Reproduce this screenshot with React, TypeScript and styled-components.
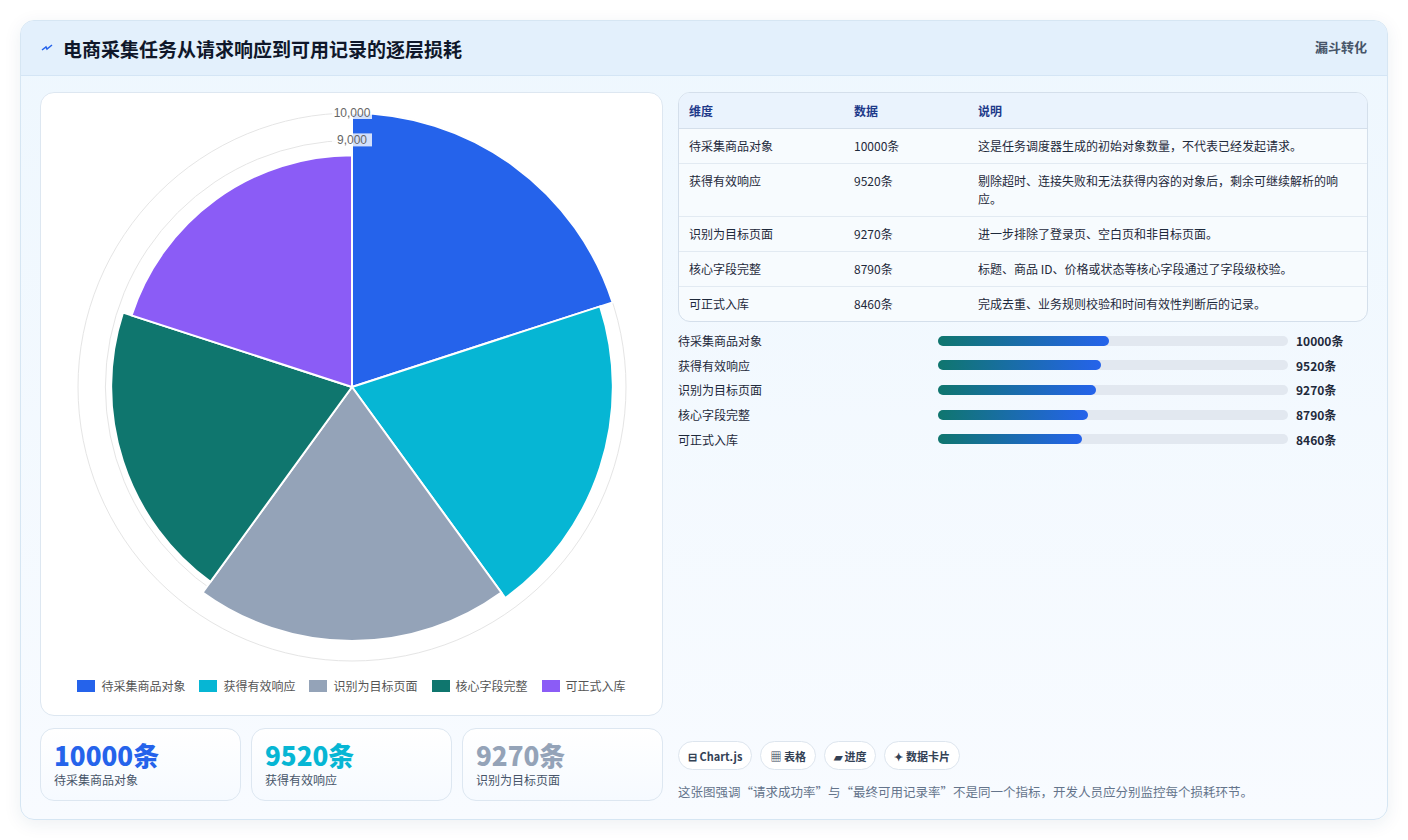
import React from 'react';
import styled, { createGlobalStyle } from 'styled-components';

const GlobalStyle = createGlobalStyle`
  html, body { margin: 0; padding: 0; background: #fff; }
  body { font-family: "Noto Sans CJK SC", "Noto Sans", sans-serif; color: #1e293b; }
  * { box-sizing: border-box; }
`;

const rows = [
  { name: '待采集商品对象', value: 10000, color: '#2563eb', note: '这是任务调度器生成的初始对象数量，不代表已经发起请求。' },
  { name: '获得有效响应', value: 9520, color: '#06b6d4', note: '剔除超时、连接失败和无法获得内容的对象后，剩余可继续解析的响应。' },
  { name: '识别为目标页面', value: 9270, color: '#94a3b8', note: '进一步排除了登录页、空白页和非目标页面。' },
  { name: '核心字段完整', value: 8790, color: '#0f766e', note: '标题、商品 ID、价格或状态等核心字段通过了字段级校验。' },
  { name: '可正式入库', value: 8460, color: '#8b5cf6', note: '完成去重、业务规则校验和时间有效性判断后的记录。' },
];

const Page = styled.div`
  padding: 20px;
`;

const Card = styled.div`
  width: 1368px;
  height: 800px;
  border: 1px solid #d6e6f3;
  border-radius: 14px;
  background: linear-gradient(180deg, #eef7fe 0%, #f8fbff 100%);
  box-shadow: 0 4px 18px rgba(30, 60, 100, 0.08);
  overflow: hidden;
  display: flex;
  flex-direction: column;
`;

const Header = styled.div`
  height: 56px;
  background: #e3f0fc;
  border-bottom: 1px solid #d4e5f5;
  display: flex;
  align-items: center;
  justify-content: space-between;
  padding: 0 20px;
`;

const Title = styled.h1`
  margin: 0;
  font-size: 19px;
  font-weight: 700;
  color: #0f172a;
  display: flex;
  align-items: center;
  gap: 10px;
`;

const Tag = styled.span`
  font-size: 13px;
  font-weight: 700;
  color: #475569;
  align-self: flex-start;
  margin-top: 16px;
`;

const Body = styled.div`
  flex: 1;
  display: grid;
  grid-template-columns: 623px 690px;
  gap: 15px;
  padding: 16px 19px 18px 19px;
`;

const LeftCol = styled.div`
  display: flex;
  flex-direction: column;
  gap: 12px;
`;

const ChartCard = styled.div`
  height: 624px;
  background: #fff;
  border: 1px solid #dde7f1;
  border-radius: 14px;
  display: flex;
  flex-direction: column;
  align-items: center;
`;

const Legend = styled.div`
  display: flex;
  gap: 14px;
  font-size: 12px;
  color: #555;
  margin-top: 6px;
`;

const LegendItem = styled.div`
  display: flex;
  align-items: center;
  gap: 6px;
`;

const Swatch = styled.span<{ $c: string }>`
  width: 18px;
  height: 12px;
  background: ${p => p.$c};
`;

const Stats = styled.div`
  display: grid;
  grid-template-columns: repeat(3, 1fr);
  gap: 10px;
`;

const Stat = styled.div`
  height: 73px;
  border: 1px solid #dde7f1;
  border-radius: 14px;
  background: linear-gradient(180deg, #fff, #f6faff);
  padding: 10px 13px;
`;

const StatValue = styled.div<{ $c: string }>`
  font-size: 26px;
  font-weight: 800;
  line-height: 32px;
  color: ${p => p.$c};
`;

const StatLabel = styled.div`
  font-size: 12px;
  color: #475569;
`;

const RightCol = styled.div`
  display: flex;
  flex-direction: column;
`;

const Table = styled.table`
  width: 100%;
  border-collapse: separate;
  border-spacing: 0;
  border: 1px solid #d4dfeb;
  border-radius: 12px;
  overflow: hidden;
  font-size: 12px;
  background: #f7fbfe;
`;

const Th = styled.th`
  text-align: left;
  font-weight: 700;
  color: #1e3a8a;
  background: #eaf3fd;
  padding: 9px 10px;
  height: 33px;
  border-bottom: 1px solid #d4dfeb;
`;

const Td = styled.td`
  padding: 8px 10px;
  color: #1e293b;
  vertical-align: top;
  line-height: 18px;
  border-bottom: 1px solid #e2eaf2;
  tr:last-child & { border-bottom: none; }
`;

const Bars = styled.div`
  display: flex;
  flex-direction: column;
  gap: 7px;
  margin-top: 10px;
`;

const BarRow = styled.div`
  display: grid;
  grid-template-columns: 260px 358px 72px;
  align-items: center;
  font-size: 12px;
  height: 17.6px;
`;

const Track = styled.div`
  height: 10px;
  border-radius: 5px;
  background: #e2e8f0;
  margin-right: 8px;
`;

const Fill = styled.div`
  height: 100%;
  border-radius: 5px;
  background: linear-gradient(90deg, #0f766e, #2563eb);
`;

const BarValue = styled.span`
  font-weight: 700;
  color: #1e293b;
`;

const Footer = styled.div`
  margin-top: auto;
  display: flex;
  flex-direction: column;
  gap: 12px;
`;

const Chips = styled.div`
  display: flex;
  gap: 8px;
`;

const Chip = styled.span`
  height: 29px;
  padding: 0 9px;
  border: 1px solid #dde5ee;
  border-radius: 15px;
  background: #fff;
  font-size: 11px;
  font-weight: 700;
  color: #334155;
  display: flex;
  align-items: center;
  gap: 4px;
`;

const Note = styled.p`
  margin: 0;
  font-size: 12.5px;
  color: #64748b;
`;

function PolarChart() {
  const cx = 311, cy = 294, R = 274;
  const rings = [1, 2, 3, 4, 5, 6, 7, 8, 9, 10];
  const arc = (r: number, a0: number, a1: number) => {
    const p = (a: number) => [cx + r * Math.sin(a), cy - r * Math.cos(a)];
    const [x0, y0] = p(a0);
    const [x1, y1] = p(a1);
    return `M${cx},${cy} L${x0},${y0} A${r},${r} 0 0 1 ${x1},${y1} Z`;
  };
  const step = (Math.PI * 2) / rows.length;
  return (
    <svg width="622" height="578" style={{ marginTop: 0 }}>
      {rings.map(k => (
        <circle key={k} cx={cx} cy={cy} r={(R * k) / 10} fill="none" stroke="#e5e5e5" strokeWidth="1" />
      ))}
      {rows.map((r, i) => (
        <path key={r.name} d={arc((R * r.value) / 10000, i * step, (i + 1) * step)} fill={r.color} stroke="#fff" strokeWidth="2" />
      ))}
      {[10, 9].map(k => (
        <g key={k}>
          <rect x={cx - 20} y={cy - (R * k) / 10 - 7} width="40" height="13" fill="#fff" opacity="0.8" />
          <text x={cx} y={cy - (R * k) / 10 + 4} textAnchor="middle" fontSize="12" fill="#666" fontFamily="Liberation Sans, sans-serif">
            {k === 10 ? '10,000' : '9,000'}
          </text>
        </g>
      ))}
    </svg>
  );
}

export default function App() {
  return (
    <Page>
      <GlobalStyle />
      <Card>
        <Header>
          <Title>
            <svg width="12" height="10" viewBox="0 0 12 10">
              <path d="M1 7 L5 4 L6 6 L11 2" stroke="#2563eb" strokeWidth="1.5" fill="none" />
            </svg>
            电商采集任务从请求响应到可用记录的逐层损耗
          </Title>
          <Tag>漏斗转化</Tag>
        </Header>
        <Body>
          <LeftCol>
            <ChartCard>
              <PolarChart />
              <Legend>
                {rows.map(r => (
                  <LegendItem key={r.name}>
                    <Swatch $c={r.color} />
                    {r.name}
                  </LegendItem>
                ))}
              </Legend>
            </ChartCard>
            <Stats>
              {rows.slice(0, 3).map(r => (
                <Stat key={r.name}>
                  <StatValue $c={r.color}>{r.value}条</StatValue>
                  <StatLabel>{r.name}</StatLabel>
                </Stat>
              ))}
            </Stats>
          </LeftCol>
          <RightCol>
            <Table>
              <thead>
                <tr>
                  <Th style={{ width: 165 }}>维度</Th>
                  <Th style={{ width: 124 }}>数据</Th>
                  <Th>说明</Th>
                </tr>
              </thead>
              <tbody>
                {rows.map(r => (
                  <tr key={r.name}>
                    <Td>{r.name}</Td>
                    <Td>{r.value}条</Td>
                    <Td>{r.note}</Td>
                  </tr>
                ))}
              </tbody>
            </Table>
            <Bars>
              {rows.map(r => (
                <BarRow key={r.name}>
                  <span>{r.name}</span>
                  <Track>
                    <Fill style={{ width: `${(r.value / 20500) * 100}%` }} />
                  </Track>
                  <BarValue>{r.value}条</BarValue>
                </BarRow>
              ))}
            </Bars>
            <Footer>
              <Chips>
                <Chip>⊟ Chart.js</Chip>
                <Chip>▦ 表格</Chip>
                <Chip>▰ 进度</Chip>
                <Chip>✦ 数据卡片</Chip>
              </Chips>
              <Note>这张图强调“请求成功率”与“最终可用记录率”不是同一个指标，开发人员应分别监控每个损耗环节。</Note>
            </Footer>
          </RightCol>
        </Body>
      </Card>
    </Page>
  );
}
